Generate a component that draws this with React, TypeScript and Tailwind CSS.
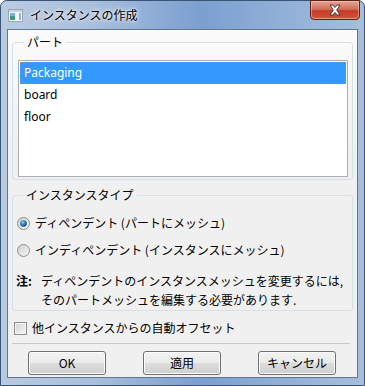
import React from "react";

const jp = { fontFamily: '"Noto Sans CJK JP", "Noto Sans", sans-serif' };

function Radio({ checked }: { checked?: boolean }) {
  return (
    <svg width="13" height="13" viewBox="0 0 13 13" className="shrink-0">
      <defs>
        <linearGradient id={checked ? "rg1" : "rg0"} x1="0" y1="0" x2="1" y2="1">
          <stop offset="0" stopColor="#cfcfcf" />
          <stop offset="1" stopColor="#f6f6f6" />
        </linearGradient>
        <radialGradient id="dot" cx="0.4" cy="0.35" r="0.7">
          <stop offset="0" stopColor="#8fd3f5" />
          <stop offset="0.5" stopColor="#2c7cb8" />
          <stop offset="1" stopColor="#0d3f6e" />
        </radialGradient>
      </defs>
      <circle cx="6.5" cy="6.5" r="6" fill={`url(#${checked ? "rg1" : "rg0"})`} stroke="#8e8f8f" />
      {checked ? <circle cx="6.5" cy="6.5" r="3.3" fill="url(#dot)" /> : null}
    </svg>
  );
}

function Btn({ children }: { children: React.ReactNode }) {
  return (
    <button className="w-[78px] h-[24px] rounded-[3px] border border-[#707070] bg-[linear-gradient(#f2f2f2_0%,#ebebeb_50%,#dddddd_50%,#cfcfcf_100%)] shadow-[inset_0_0_0_1px_#fcfcfc] text-[12px] leading-[20px] text-black">
      {children}
    </button>
  );
}

export default function App() {
  return (
    <div className="w-[365px] h-[386px] overflow-hidden bg-white">
      <div className="w-[365px] h-[386px] rounded-t-[7px] border border-[#3a5475] bg-[linear-gradient(90deg,#b9cbe1_0%,#a9bfdc_25%,#7b9fd0_55%,#8eaed6_75%,#a7bedb_100%)] flex flex-col">
        {/* title bar */}
        <div className="relative h-[28px] flex items-center pl-[7px]">
          <svg width="15" height="13" viewBox="0 0 15 13" className="mt-[1px]">
            <rect x="0.5" y="0.5" width="14" height="12" fill="#f4f6f8" stroke="#9aa6b2" />
            <rect x="1" y="1" width="13" height="2" fill="#c9d3dd" />
            <rect x="2" y="4" width="5" height="7" fill="#3f9a7c" />
            <rect x="2" y="4" width="5" height="3" fill="#6fb7d9" />
            <rect x="11" y="4" width="2" height="7" fill="#8fb4d6" />
          </svg>
          <span
            className="ml-[7px] text-[12px] leading-[14px] text-black [text-shadow:0_0_6px_#ffffff,0_0_3px_#ffffff]"
            style={jp}
          >
            インスタンスの作成
          </span>
          <div className="absolute top-[-1px] right-[4px] w-[50px] h-[20px] rounded-b-[4px] border border-[#5c2019] bg-[linear-gradient(#e6a493_0%,#d0715c_45%,#c23a26_55%,#d4553a_100%)] shadow-[inset_0_0_0_1px_rgba(255,210,200,0.5)] flex items-center justify-center">
            <svg width="14" height="12" viewBox="0 0 14 12">
              <path
                d="M2 1 L5 1 L7 3.5 L9 1 L12 1 L8.7 6 L12 11 L9 11 L7 8.5 L5 11 L2 11 L5.3 6 Z"
                fill="#ffffff"
                stroke="#3b2b2b"
                strokeWidth="0.9"
                strokeLinejoin="round"
              />
            </svg>
          </div>
        </div>

        {/* client area */}
        <div
          className="mx-[6px] mb-[7px] flex-1 border border-[#5f7696] bg-[linear-gradient(#fbfbfb_0%,#f0f0f0_35%,#f0f0f0_100%)] flex flex-col px-[4px] text-black"
          style={jp}
        >
          <fieldset className="mt-[5px] border border-[#d5dfe5] rounded-[3px] pl-[5px] pr-[4px] pb-[2px]">
            <legend className="ml-[6px] px-[3px] text-[12px] leading-[14px]">パート</legend>
            <div className="mt-[11px] h-[117px] border border-[#abadb3] bg-white p-[1px] text-[12px]" style={{ fontFamily: '"Noto Sans", "Noto Sans CJK JP", sans-serif' }}>
              <div className="h-[22px] bg-[#3399ff] border border-dotted border-[#c7862f] text-white pl-[3px] leading-[20px]">
                Packaging
              </div>
              <div className="h-[22px] pl-[4px] leading-[22px]">board</div>
              <div className="h-[22px] pl-[4px] leading-[22px]">floor</div>
            </div>
          </fieldset>

          <fieldset className="mt-[8px] border border-[#d5dfe5] rounded-[3px] pl-[4px] pr-[4px] pb-[1px]">
            <legend className="ml-[6px] px-[3px] text-[12px] leading-[14px]">インスタンスタイプ</legend>
            <div className="mt-[12px] h-[18px] flex items-center gap-[5px] text-[12px]">
              <Radio checked />
              <span>ディペンデント (パートにメッシュ)</span>
            </div>
            <div className="mt-[9px] h-[18px] flex items-center gap-[5px] text-[12px]">
              <Radio />
              <span>インディペンデント (インスタンスにメッシュ)</span>
            </div>
            <div className="mt-[12px] flex text-[12px] leading-[19px]">
              <span className="w-[25px] shrink-0 font-bold -ml-[1px]">注:</span>
              <span>
                ディペンデントのインスタンスメッシュを変更するには,
                <br />
                そのパートメッシュを編集する必要があります.
              </span>
            </div>
          </fieldset>

          <div className="mt-[8px] h-[18px] flex items-center gap-[5px] pl-[2px] text-[12px]">
            <span className="w-[13px] h-[13px] border border-[#8e8f8f] bg-[linear-gradient(135deg,#d3d3d3,#f7f7f7)] shadow-[inset_0_0_0_1px_#f4f4f4]" />
            <span>他インスタンスからの自動オフセット</span>
          </div>

          <div className="mt-[6px] h-px bg-[#c8c8c8] mr-[3px]" />

          <div className="mt-[7px] flex gap-[37px] pl-[16px]">
            <Btn>OK</Btn>
            <Btn>適用</Btn>
            <Btn>キャンセル</Btn>
          </div>
        </div>
      </div>
    </div>
  );
}
